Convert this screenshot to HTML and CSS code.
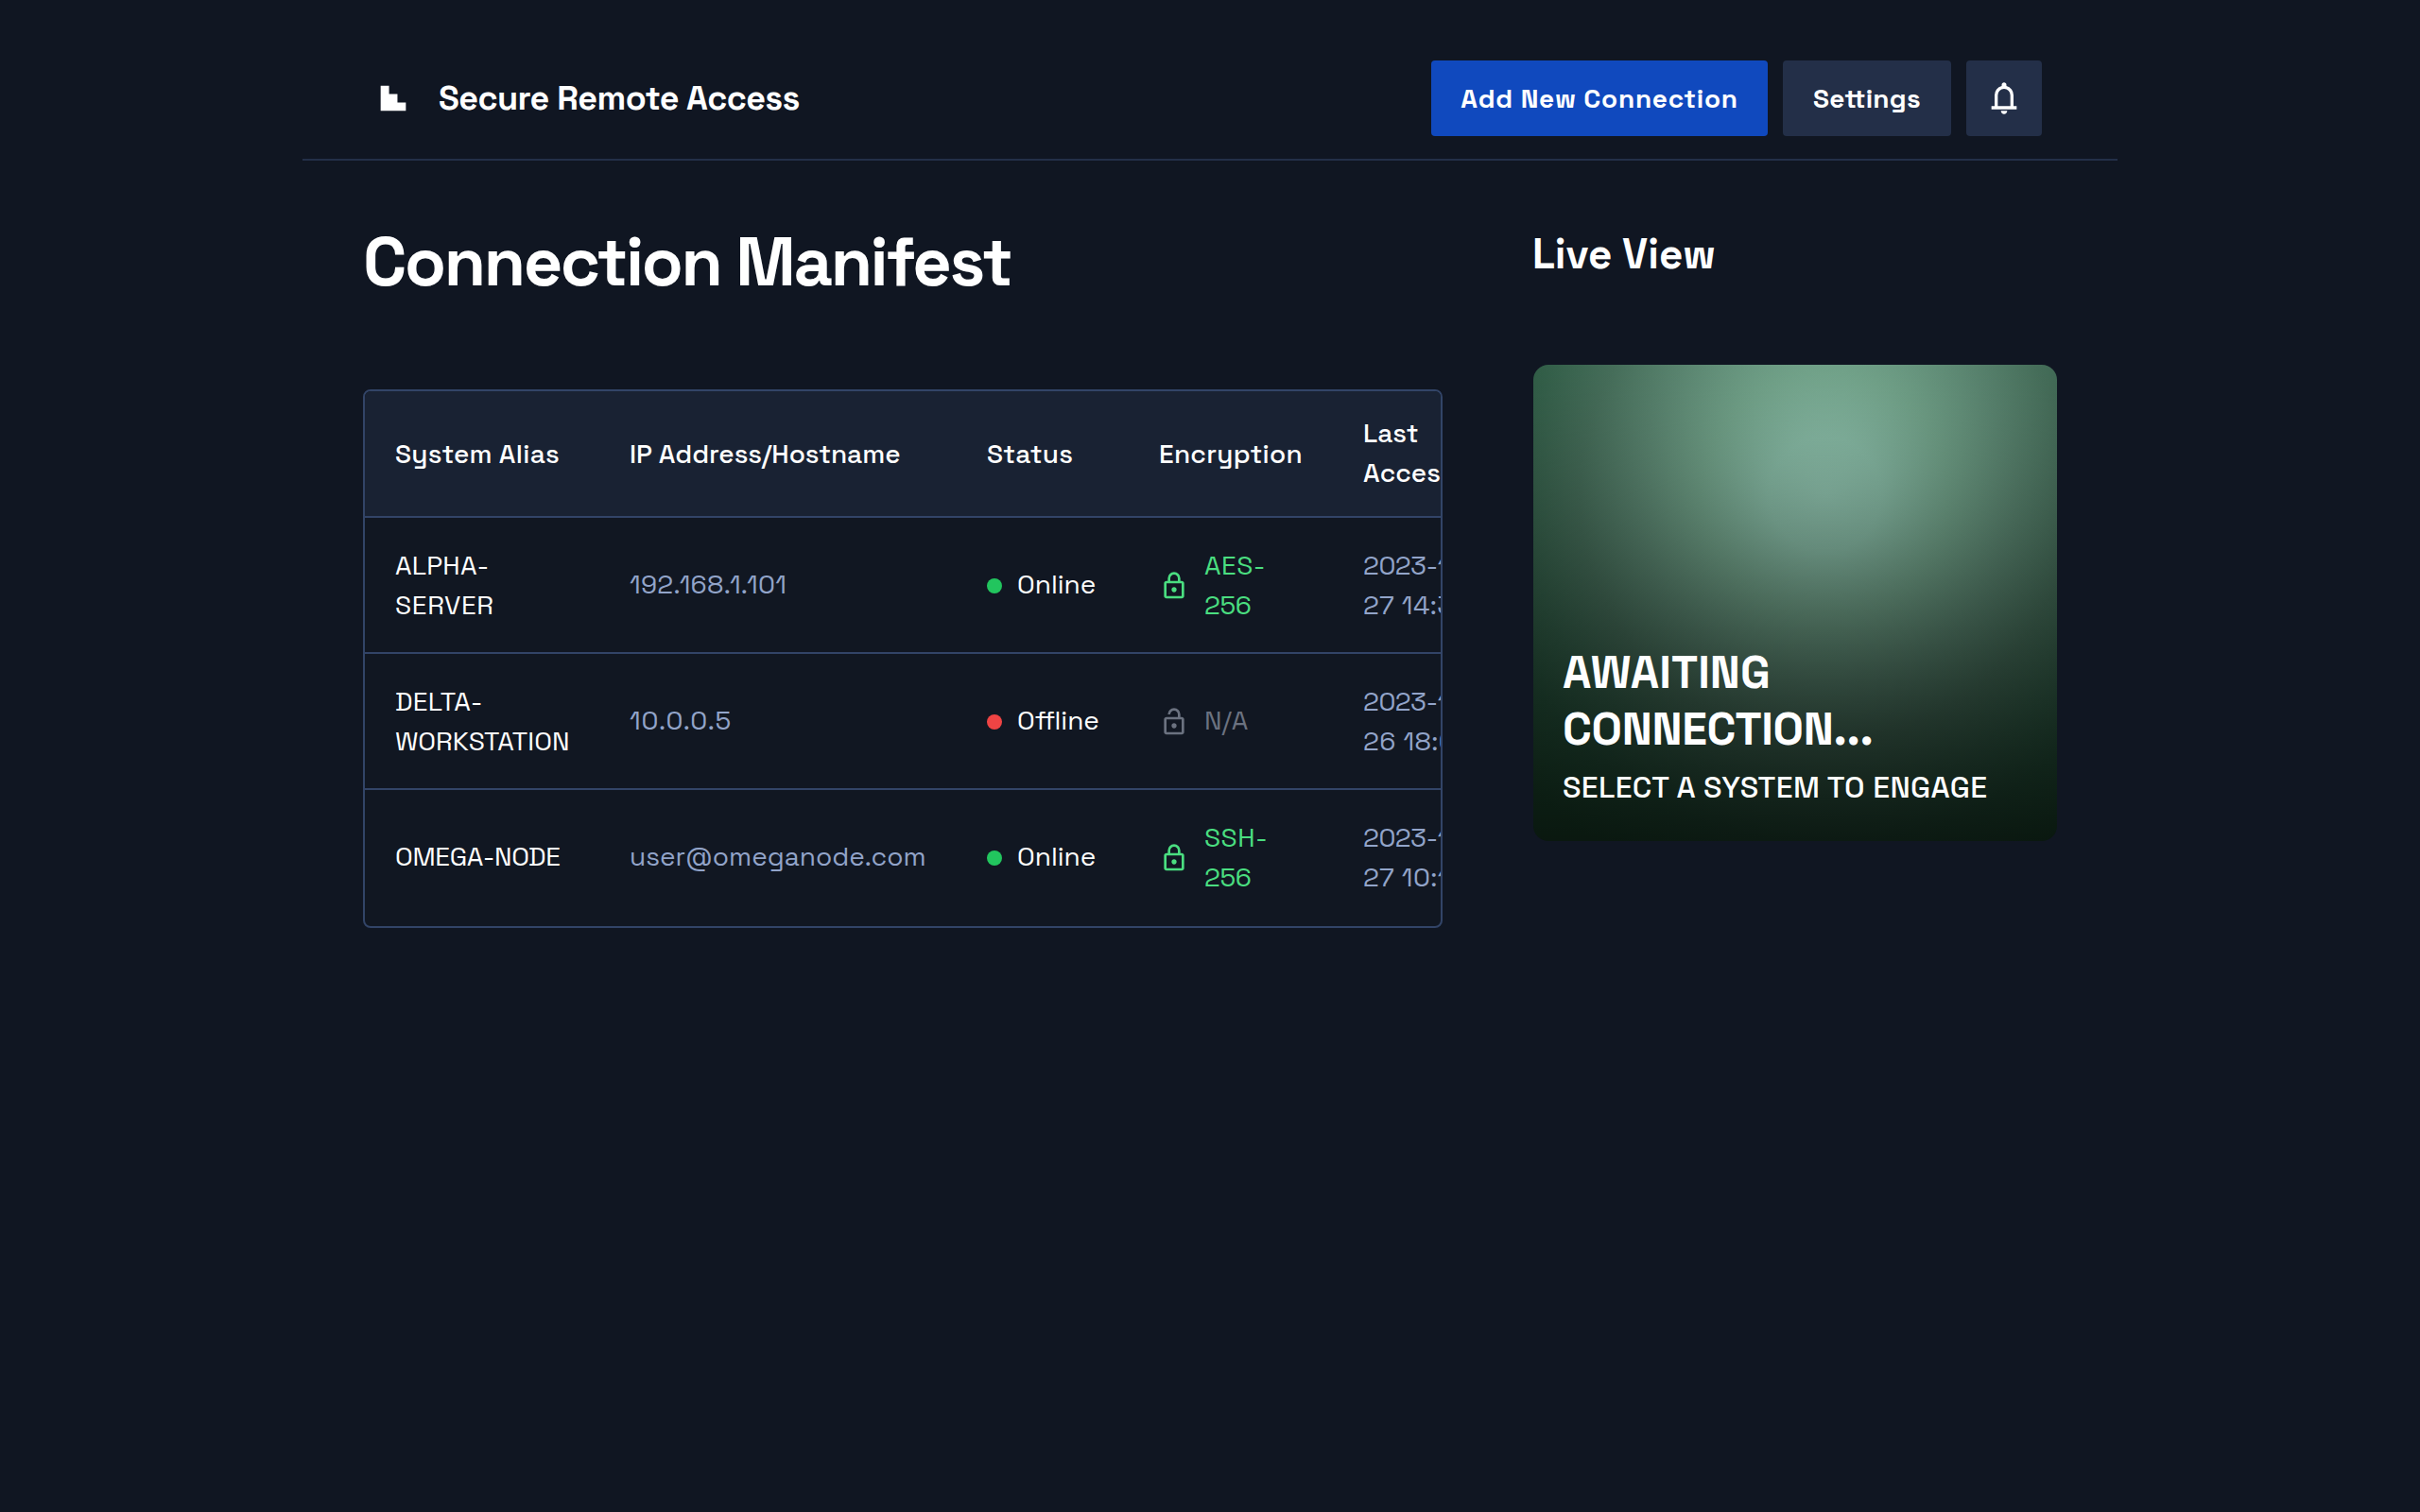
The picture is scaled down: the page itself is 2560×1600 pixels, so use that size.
FILE: index.html
```
<!DOCTYPE html>
<html lang="en">
<head>
<meta charset="utf-8">
<title>Secure Remote Access</title>
<link rel="stylesheet" href="styles.css">
</head>
<body>
<svg class="defs" aria-hidden="true">
  <symbol id="lock" viewBox="0 -960 960 960"><path d="M240-80q-33 0-56.500-23.500T160-160v-400q0-33 23.500-56.500T240-640h40v-80q0-83 58.500-141.500T480-920q83 0 141.500 58.500T680-720v80h40q33 0 56.500 23.500T800-560v400q0 33-23.500 56.500T720-80H240Zm0-80h480v-400H240v400Zm240-120q33 0 56.500-23.500T560-360q0-33-23.500-56.500T480-440q-33 0-56.500 23.500T400-360q0 33 23.500 56.500T480-280ZM360-640h240v-80q0-50-35-85t-85-35q-50 0-85 35t-35 85v80Z"/></symbol>
  <symbol id="lock-open" viewBox="0 -960 960 960"><path d="M240-80q-33 0-56.500-23.500T160-160v-400q0-33 23.500-56.500T240-640h360v-80q0-50-35-85t-85-35q-50 0-85 35t-35 85h-80q0-83 58.500-141.500T480-920q83 0 141.500 58.500T680-720v80h40q33 0 56.500 23.500T800-560v400q0 33-23.500 56.500T720-80H240Zm0-80h480v-400H240v400Zm240-120q33 0 56.500-23.500T560-360q0-33-23.500-56.500T480-440q-33 0-56.500 23.500T400-360q0 33 23.500 56.500T480-280Z"/></symbol>
</svg>
<div class="page">
  <header class="topbar">
    <div class="brand">
      <svg class="logo" viewBox="0 0 48 48"><path d="M4 4H17.330V17.330H30.670V30.670H44V44H4Z"/></svg>
      <h2 class="brand-name">Secure Remote Access</h2>
    </div>
    <nav class="actions">
      <button class="btn btn-primary">Add New Connection</button>
      <button class="btn btn-settings">Settings</button>
      <button class="btn btn-icon" aria-label="Notifications"><svg class="bell" viewBox="0 -960 960 960"><path d="M160-200v-80h80v-280q0-83 50-147.500T420-792v-28q0-25 17.500-42.500T480-880q25 0 42.500 17.500T540-820v28q80 20 130 84.500T720-560v280h80v80H160ZM480-80q-33 0-56.500-23.500T400-160h160q0 33-23.500 56.500T480-80ZM320-280h320v-280q0-66-47-113t-113-47q-66 0-113 47t-47 113v280Z"/></svg></button>
    </nav>
  </header>
  <main class="content">
    <section class="manifest">
      <h1 class="heading">Connection Manifest</h1>
      <div class="table-frame">
        <table class="table">
          <colgroup><col class="c-alias"><col class="c-host"><col class="c-status"><col class="c-enc"><col class="c-last"></colgroup>
          <thead><tr><th>System Alias</th><th class="th-host">IP Address/Hostname</th><th>Status</th><th>Encryption</th><th class="th-last">Last<br>Accessed</th></tr></thead>
          <tbody>
            <tr>
              <td class="alias">ALPHA-<br><span class="loose">SERVER</span></td><td class="muted single ip">192.168.1.101</td>
              <td class="single"><div class="cell"><span class="dot online"></span>Online</div></td>
              <td><div class="cell secure"><svg class="icon"><use href="#lock"/></svg><span><span class="cipher">AES-</span><br><span class="bits">256</span></span></div></td>
              <td class="muted"><span class="date">2023-10-</span><br><span class="time">27 14:30</span></td>
            </tr>
            <tr>
              <td><span class="alias">DELTA-</span><br>WORKSTATION</td><td class="muted single ip-short">10.0.0.5</td>
              <td class="single"><div class="cell"><span class="dot offline"></span>Offline</div></td>
              <td class="single"><div class="cell insecure"><svg class="icon"><use href="#lock-open"/></svg><span>N/A</span></div></td>
              <td class="muted"><span class="date">2023-10-</span><br><span class="time">26 18:00</span></td>
            </tr>
            <tr>
              <td class="single tight">OMEGA-NODE</td><td class="muted single">user@omeganode.com</td>
              <td class="single"><div class="cell"><span class="dot online"></span>Online</div></td>
              <td><div class="cell secure"><svg class="icon"><use href="#lock"/></svg><span><span class="cipher">SSH-</span><br><span class="bits">256</span></span></div></td>
              <td class="muted"><span class="date">2023-10-</span><br><span class="time">27 10:15</span></td>
            </tr>
          </tbody>
        </table>
      </div>
    </section>
    <aside class="live">
      <h2 class="live-title">Live View</h2>
      <div class="preview">
        <p class="preview-title">AWAITING <span class="tight">CONNECTION...</span></p>
        <p class="preview-sub">SELECT A SYSTEM TO ENGAGE</p>
      </div>
    </aside>
  </main>
</div>
</body>
</html>
```
FILE: styles.css
```
* { box-sizing: border-box; margin: 0; padding: 0; }
body {
  min-height: 1600px;
  background: #101622;
  color: #fff;
  font: 400 28px/42px "Space Grotesk", Inter, "Noto Sans", sans-serif;
}
.defs { display: none; }
.page { width: 1920px; margin: 0 auto; padding-top: 40px; }

.topbar {
  display: flex;
  align-items: center;
  justify-content: space-between;
  height: 130px;
  padding: 24px 80px;
  border-bottom: 2px solid #232f48;
}
.brand { display: flex; align-items: center; gap: 32px; }
.logo { width: 32px; height: 32px; fill: #fff; }
.brand-name { font-size: 36px; line-height: 45px; font-weight: 700; letter-spacing: -0.6px; }
.actions { display: flex; gap: 16px; }
.btn {
  display: flex;
  align-items: center;
  justify-content: center;
  height: 80px;
  border: 0;
  border-radius: 4px;
  background: #232f48;
  color: #fff;
  font: inherit;
  font-weight: 700;
  letter-spacing: 0.025em;
}
.btn-primary { width: 356px; background: #1049be; }
.btn-settings { width: 178px; letter-spacing: 0.25px; }
.btn-icon { width: 80px; }
.bell { width: 40px; height: 40px; fill: #fff; }

.content { display: flex; justify-content: space-between; padding: 62px 64px 0; }
.manifest { width: 1142px; }
.heading { font-size: 72px; line-height: 90px; font-weight: 700; letter-spacing: -0.033em; margin-bottom: 90px; }
.table-frame { height: 570px; overflow: hidden; background: #111722; border: 2px solid #324467; border-radius: 8px; }
.table { width: 1190px; table-layout: fixed; border-collapse: separate; border-spacing: 0; }
.c-alias { width: 248px; }
.c-host { width: 378px; }
.c-status { width: 182px; }
.c-enc { width: 216px; }
.c-last { width: 166px; }
.table th { height: 132px; padding: 0 32px; background: #192233; text-align: left; font-weight: 500; letter-spacing: 0.25px; white-space: nowrap; }
.table .th-host { letter-spacing: -0.05px; }
.table .th-last { padding-bottom: 2px; letter-spacing: 0; }
.table td { height: 144px; padding: 0 32px; border-top: 2px solid #324467; white-space: nowrap; }
.table .single { padding-bottom: 2px; }
.alias { letter-spacing: 0.2px; }
.loose { letter-spacing: 0.6px; }
.tight { letter-spacing: -0.35px; }
.ip { letter-spacing: 0.25px; }
.ip-short { letter-spacing: 0.85px; }
.date { letter-spacing: -0.5px; }
.time { letter-spacing: 0.4px; }
.cipher { letter-spacing: 0.4px; }
.bits { letter-spacing: -0.5px; }
.muted { color: #92a4c9; }
.cell { display: flex; align-items: center; gap: 16px; }
.dot { flex: none; width: 16px; height: 16px; margin-top: 4px; border-radius: 50%; }
.online { background: #22c55e; }
.offline { background: #ef4444; }
.icon { flex: none; width: 32px; height: 32px; margin-top: 2px; fill: currentColor; }
.single .icon { margin-top: 4px; }
.secure { color: #4ade80; }
.insecure { color: #6b7280; }

.live { width: 554px; padding-top: 10px; }
.live-title { margin: 0 0 89px -1px; font-size: 44px; line-height: 55px; font-weight: 700; }
.preview {
  display: flex;
  flex-direction: column;
  justify-content: flex-end;
  height: 504px;
  padding: 32px 31px 33px;
  border-radius: 16px;
  background:
    linear-gradient(180deg, rgba(0, 0, 0, 0), rgba(0, 0, 0, 0.7)),
    radial-gradient(circle 480px at 309px 137px, #92c6b1 0, #8abea8 60px, #72a38a 130px, #5a8570 200px, #466e5a 260px, #34604a 320px, #28563e 370px, #205034 440px);
}
.preview-title { width: 400px; font-size: 48px; line-height: 60px; font-weight: 700; }
.preview-sub { margin-top: 7px; font-size: 32px; line-height: 48px; font-weight: 500; letter-spacing: 0.3px; }
```
